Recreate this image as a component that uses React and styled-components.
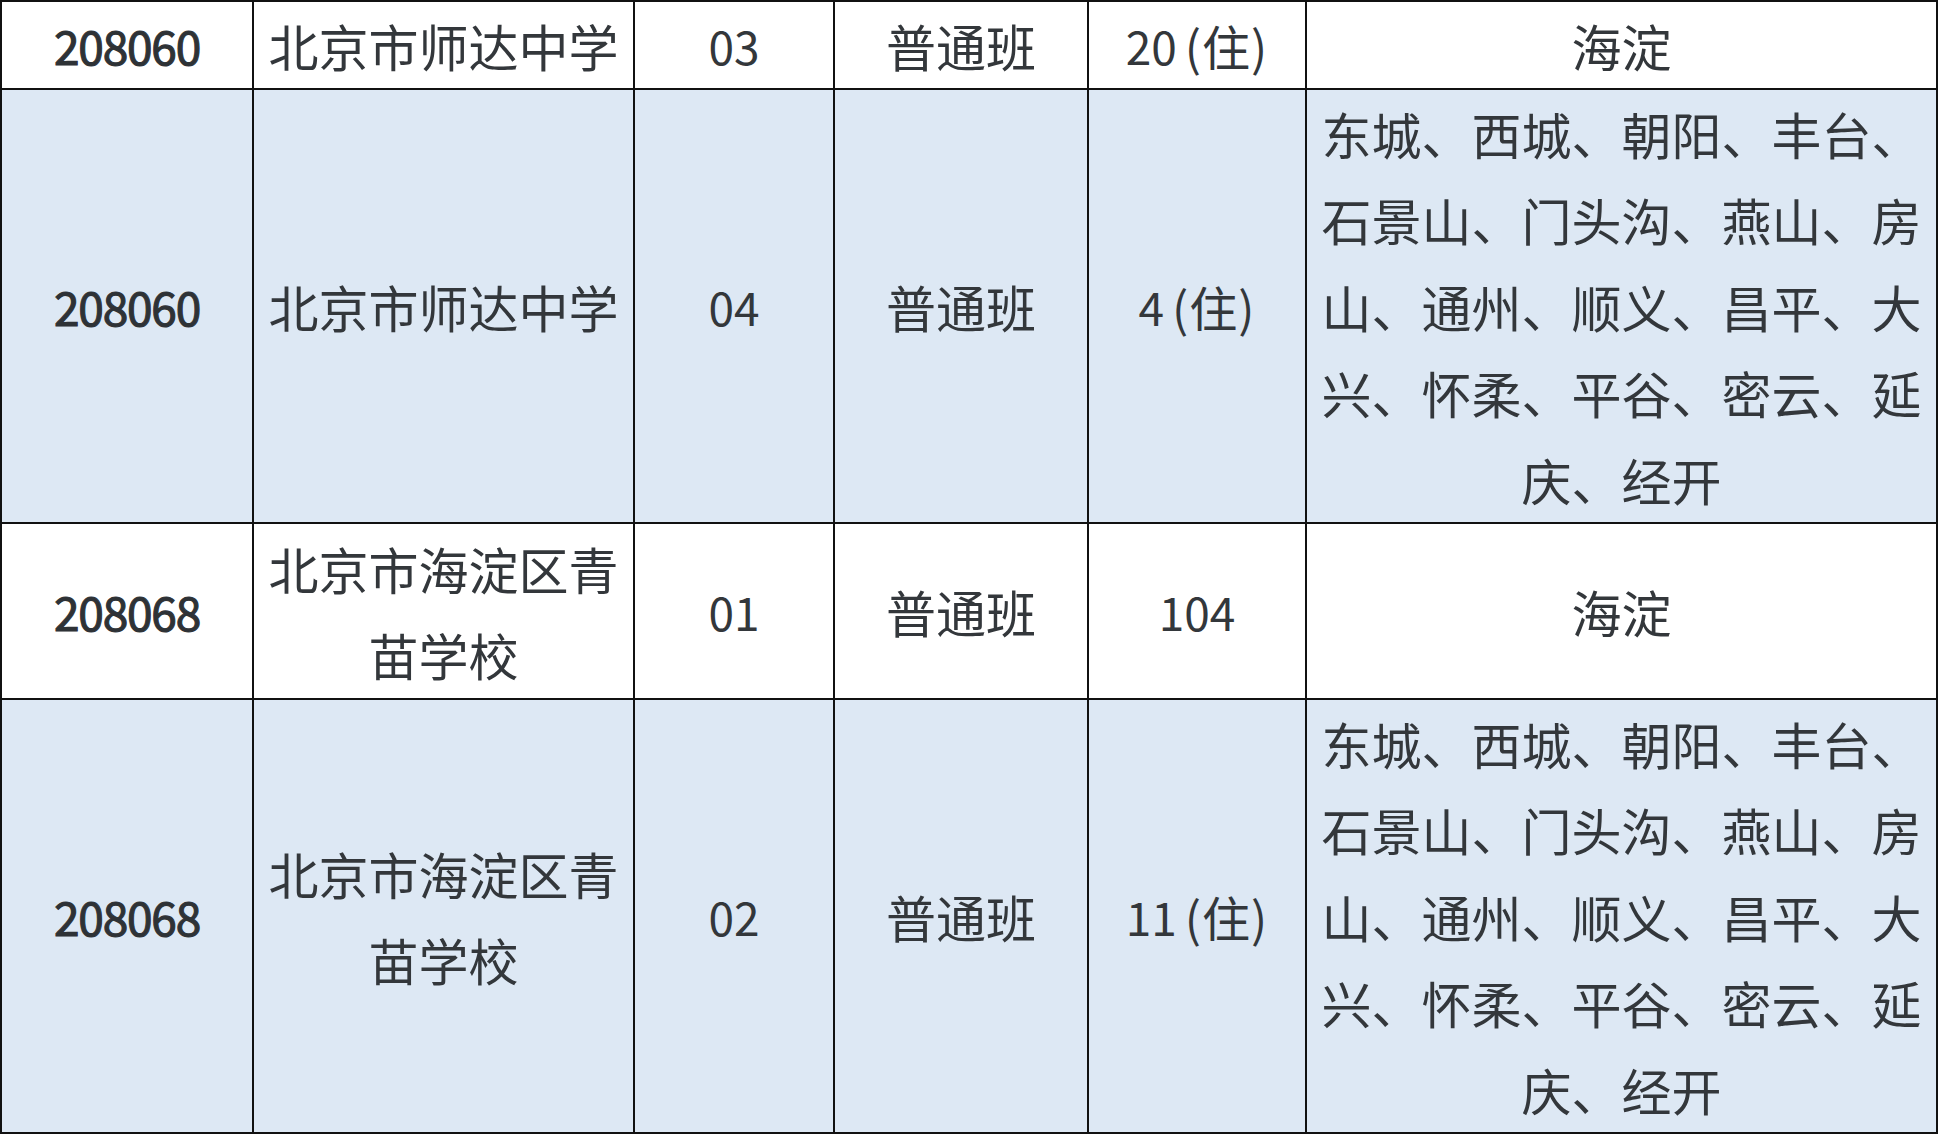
import React from 'react';
import styled, { createGlobalStyle } from 'styled-components';

const GlobalStyle = createGlobalStyle`
  html, body {
    margin: 0;
    padding: 0;
    background: #ffffff;
  }
  body {
    font-family: "Noto Sans CJK SC", "Noto Sans", sans-serif;
    color: #33373b;
  }
`;

const REGIONS = '东城、西城、朝阳、丰台、石景山、门头沟、燕山、房山、通州、顺义、昌平、大兴、怀柔、平谷、密云、延庆、经开';

const rows = [
  { code: '208060', school: '北京市师达中学', no: '03', type: '普通班', plan: '20', live: true, area: '海淀', tint: false },
  { code: '208060', school: '北京市师达中学', no: '04', type: '普通班', plan: '4', live: true, area: REGIONS, tint: true },
  { code: '208068', school: '北京市海淀区青苗学校', no: '01', type: '普通班', plan: '104', live: false, area: '海淀', tint: false },
  { code: '208068', school: '北京市海淀区青苗学校', no: '02', type: '普通班', plan: '11', live: true, area: REGIONS, tint: true },
];

const App = () => {
  return (
    <>
      <GlobalStyle />
      <Table>
        {rows.map((r, i) => (
          <React.Fragment key={i}>
            <Cell $tint={r.tint}><Code>{r.code}</Code></Cell>
            <Cell $tint={r.tint} $pad={12}>{r.school}</Cell>
            <Cell $tint={r.tint}><Num>{r.no}</Num></Cell>
            <Cell $tint={r.tint}>{r.type}</Cell>
            <Cell $tint={r.tint}>
              <Num>{r.plan}</Num>
              {r.live && <Live>(住)</Live>}
            </Cell>
            <Cell $tint={r.tint} $pad={12}>{r.area}</Cell>
          </React.Fragment>
        ))}
      </Table>
    </>
  );
};

export default App;

// Styled Components
const Table = styled.div`
  display: grid;
  grid-template-columns: 252px 381px 200px 254px 218px 631px;
  grid-template-rows: 88px 434px 176px 434px;
  width: 1938px;
  box-sizing: border-box;
  border-top: 2px solid #111;
  border-left: 2px solid #111;
`;

const Cell = styled.div`
  box-sizing: border-box;
  display: flex;
  flex-wrap: wrap;
  align-items: center;
  justify-content: center;
  text-align: center;
  padding: 0 ${p => p.$pad || 4}px;
  border-right: 2px solid #111;
  border-bottom: 2px solid #111;
  background: ${p => (p.$tint ? '#dde8f4' : '#ffffff')};
  font-size: 50px;
  line-height: 86.4px;
  overflow: hidden;
`;

const Code = styled.span`
  font-size: 46px;
  font-weight: 400;
  letter-spacing: -1.2px;
  -webkit-text-stroke: 1.1px #2e3236;
  color: #2e3236;
`;

const Num = styled.span`
  font-size: 46px;
`;

const Live = styled.span`
  font-size: 48px;
  margin-left: 8px;
  letter-spacing: 1px;
`;
